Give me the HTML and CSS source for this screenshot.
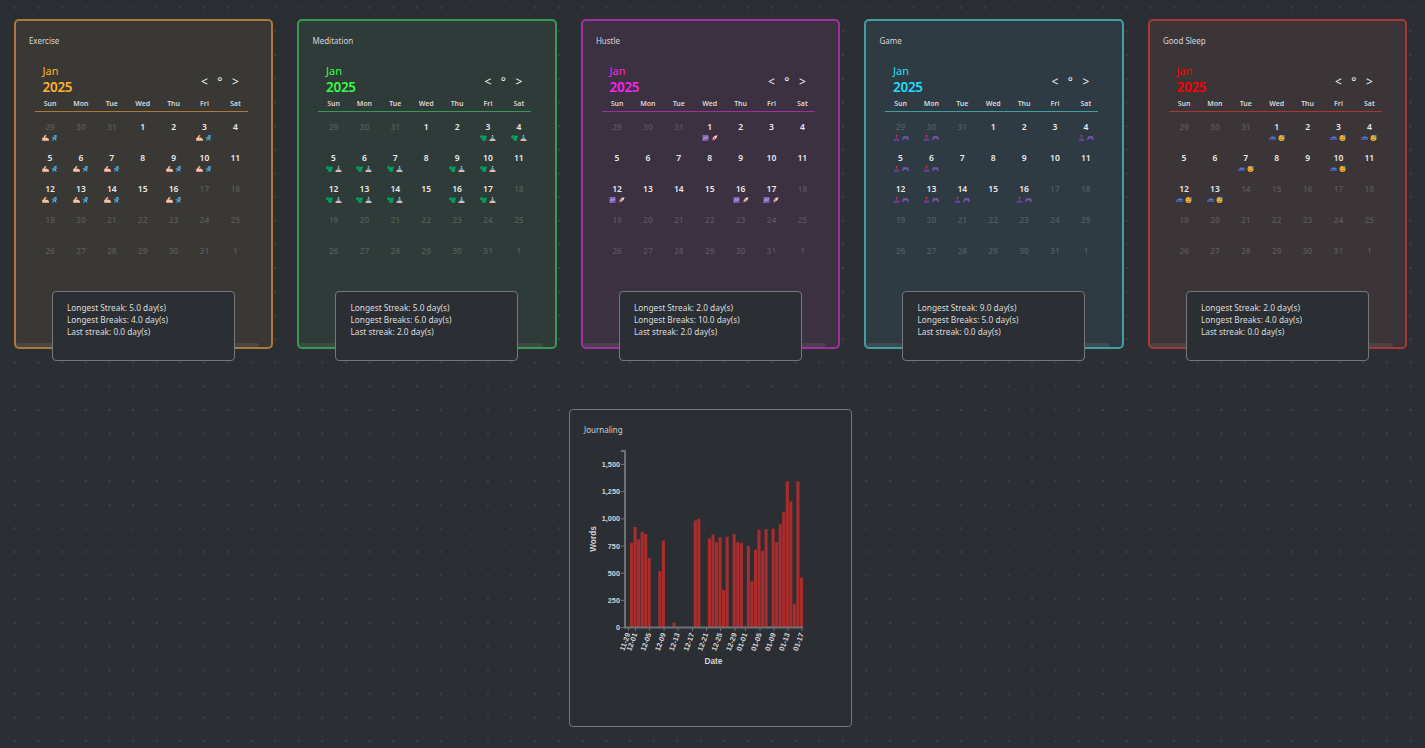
FILE: index.html
```html
<!DOCTYPE html>
<html>
<head>
    <meta charset="utf-8">
    <title>Habit Dashboard</title>
    <link rel="stylesheet" href="styles.css">
</head>
<body>

<svg class="sprites" width="0" height="0">
  <symbol id="i-flex" viewBox="0 0 14 12">
    <path fill="#f6c3a4" d="M0 12V6l3-1 2-4 3-1 1 2-2 1-1 3 3-1 4 2 1 3v2z"/>
    <path fill="#b9755a" d="M0 11h14v1H0zM0 6h1v5H0z"/>
  </symbol>
  <symbol id="i-run" viewBox="0 0 12 12">
    <path fill="#3a93cc" d="M5 0h3l1 3 3 1-1 2-3-1 1 3 2 3H8L5.500 8.500 3 12H1l2-5-3-1 1-2 3 .5z"/>
    <path fill="#aeb4ba" d="M8 0h2v3H8zM5 7l3-1 1 2-2 1z"/>
  </symbol>
  <symbol id="i-paw" viewBox="0 0 14 12">
    <path fill="#00a45f" d="M0 2l4-2 3 2 5-1 2 2-2 3 1 3-3 3-5-1-1-4-3-1z"/>
    <path fill="#0b6f55" d="M4 3h3v2H4zM9 7h2v2H9z"/>
  </symbol>
  <symbol id="i-zen" viewBox="0 0 12 12">
    <circle cx="6" cy="1.500" r="1.500" fill="#f2c2a0"/>
    <path fill="#3a9ddc" d="M4.500 3h3L10 8.500H2z"/>
    <path fill="#eeb896" d="M0 9l3-1h6l3 1v3H0z"/>
  </symbol>
  <symbol id="i-chart" viewBox="0 0 12 12">
    <path fill="#8a66b8" d="M0 0h12v12H0z"/>
    <path fill="#bfa8e0" d="M1 8l3-4 3 2 4-4v2L7 8 4 6l-2 3z"/>
    <path fill="#5d4488" d="M6 9h5v2H6z"/>
  </symbol>
  <symbol id="i-rocket" viewBox="0 0 12 12">
    <path fill="#f4dfe5" d="M12 0L6 2 2 7l3 3 5-4z"/>
    <path fill="#e8365d" d="M12 0L9 1l2 2zM2 7L0 8l1 1zM5 10l-1 2-1-1zM2 8l2 2-4 2z"/>
    <path fill="#e8365d" d="M4 6l2-2 2 2-2 2z"/>
  </symbol>
  <symbol id="i-joy" viewBox="0 0 12 12">
    <path fill="#e5333f" d="M4.500 0h3v3h-1v4h-1V3h-1z"/>
    <path fill="#5e3f96" d="M1.500 7h9l1.500 3v2H0v-2z"/>
  </symbol>
  <symbol id="i-pad" viewBox="0 0 14 10">
    <path fill="#6a4ba0" d="M2.500 1h9L14 7v2h-3L9 6H5L3 9H0V7z"/>
    <path fill="#a78bd0" d="M3.500 3h2v1h-2zM9 3h2v1H9z"/>
  </symbol>
  <symbol id="i-bed" viewBox="0 0 14 10">
    <path fill="#2f8fe6" d="M4 2l8 .5L14 6H4z"/>
    <path fill="#5b4fa0" d="M0 4h4v2h10v3H0z"/>
  </symbol>
  <symbol id="i-zzz" viewBox="0 0 12 12">
    <circle cx="6" cy="6" r="6" fill="#f1b232"/>
    <path fill="#3f8fe0" d="M7 0h5v3H7z"/>
    <path fill="#9a6a1e" d="M2 5h3v1H2zM7 5h3v1H7zM4 8h4v2H4z"/>
  </symbol>
</svg>

<div class="cards" id="cards"></div>

<div class="journal-row">
  <div class="journal">
    <div class="journal-title">Journaling</div>
    <svg id="chart" class="chart" viewBox="580 445 240 230" width="240" height="230"></svg>
  </div>
</div>

<script src="script.js"></script>
</body>
</html>
```

FILE: styles.css
```css
html, body {
    margin: 0;
    min-height: 100vh;
}
body {
    background-color: #2b2e33;
    background-image: radial-gradient(circle at center, #3d4045 0, #3d4045 1px, transparent 1.4px);
    background-size: 23.66px 23.66px;
    background-position: 3px -4px;
    font-family: "Noto Sans", "Open Sans", sans-serif;
    color: #ddd;
    overflow: hidden;
}
.sprites {
    display: block;
    height: 0;
}
.cards {
    display: grid;
    grid-template-columns: repeat(5, 259.5px);
    gap: 24px;
    padding: 19px 0 0 13.9px;
}
.card {
    position: relative;
    box-sizing: border-box;
    height: 330px;
    padding: 14px 13px 0;
    border: 2px solid;
    border-radius: 5px;
}
.card-title {
    font-size: 8px;
    line-height: 12px;
    color: #d6d6d6;
}
.cal {
    margin: 17px 0 0 5.7px;
    width: 216.3px;
}
.cal-head {
    display: flex;
    justify-content: space-between;
    padding: 0 12px 0 8px;
}
.month {
    font-size: 11px;
    line-height: 14px;
}
.year {
    font-size: 13.5px;
    line-height: 18px;
    font-weight: 600;
    letter-spacing: -0.3px;
}
.nav {
    display: flex;
    gap: 9.5px;
    align-items: center;
    margin-top: 4px;
    color: #f0f0f0;
    font-size: 12px;
    line-height: 14px;
}
.week, .days {
    display: grid;
    grid-template-columns: repeat(7, 30.9px);
    text-align: center;
}
.week {
    margin-top: 2px;
    font-size: 7px;
    line-height: 12px;
    font-weight: 600;
    color: #d8d8d8;
}
.rule {
    height: 1px;
    width: 213px;
    margin: 1px 0 9px;
}
.day {
    height: 31px;
    font-size: 8.5px;
    line-height: 12px;
    font-weight: 600;
    color: #eaeaea;
}
.day.dim {
    color: rgba(255, 255, 255, 0.17);
}
.marks {
    display: flex;
    justify-content: center;
    align-items: center;
    gap: 2px;
    height: 6px;
    margin-top: 2px;
}
.marks svg {
    width: 7px;
    height: 6px;
}
.scrollbar {
    position: absolute;
    left: 0;
    right: 12px;
    bottom: 0;
    height: 4px;
    background-color: rgba(255, 255, 255, 0.08);
    border-radius: 2px;
}
.stats {
    position: absolute;
    left: 36px;
    top: 270px;
    box-sizing: border-box;
    width: 183px;
    height: 70px;
    padding: 10px 14px;
    background-color: #2b2e33;
    border: 1px solid #75777a;
    border-radius: 4px;
    font-size: 8.3px;
    line-height: 12px;
    color: #dcdcdc;
}
.journal-row {
    display: flex;
    justify-content: center;
    padding-right: 4px;
    margin-top: 60px;
}
.journal {
    box-sizing: border-box;
    width: 283px;
    height: 318px;
    padding: 14px 10px 0;
    background-color: #2b2e33;
    border: 1px solid #75777a;
    border-radius: 4px;
}
.journal-title {
    font-size: 8px;
    line-height: 12px;
    margin: 0 0 9px 4px;
    color: #cfcfcf;
}
.chart {
    display: block;
    font-family: "Liberation Sans", sans-serif;
}
.chart .tick-text {
    font-size: 7.3px;
    font-weight: bold;
    fill: #d4d4d4;
}
.chart .axis-title {
    font-size: 8.3px;
    font-weight: bold;
    fill: #d4d4d4;
}
.chart .axis {
    stroke: #6f7174;
    fill: none;
}
.chart .bar {
    fill: #aa2c2c;
}
```

FILE: script.js
```js
const habits = [
    { name: 'Exercise', color: '#fdb32f', border: '#a87a3c', bg: '#3a3835', icons: ['i-flex', 'i-run'],
      marked: ['p29', 3, 5, 6, 7, 9, 10, 12, 13, 14, 16], last: 16,
      stats: ['5.0', '4.0', '0.0'] },
    { name: 'Meditation', color: '#33ff44', border: '#389a52', bg: '#2f3b38', icons: ['i-paw', 'i-zen'],
      marked: [3, 4, 5, 6, 7, 9, 10, 12, 13, 14, 16, 17], last: 17,
      stats: ['5.0', '6.0', '2.0'] },
    { name: 'Hustle', color: '#ff22ee', border: '#a0309e', bg: '#3b3140', icons: ['i-chart', 'i-rocket'],
      marked: [1, 12, 16, 17], last: 17,
      stats: ['2.0', '10.0', '2.0'] },
    { name: 'Game', color: '#22ddff', border: '#3f9fa3', bg: '#2f3b42', icons: ['i-joy', 'i-pad'],
      marked: ['p29', 'p30', 4, 5, 6, 12, 13, 14, 16], last: 16,
      stats: ['9.0', '5.0', '0.0'] },
    { name: 'Good Sleep', color: '#ff0000', border: '#a83838', bg: '#3b3538', icons: ['i-bed', 'i-zzz'],
      marked: [1, 3, 4, 7, 10, 12, 13], last: 13,
      stats: ['2.0', '4.0', '0.0'] }
];

const weekdays = ['Sun', 'Mon', 'Tue', 'Wed', 'Thu', 'Fri', 'Sat'];

function buildDays(habit) {
    let cells = [];
    // leading days of december, then january, then one day of february
    [29, 30, 31].forEach(d => cells.push({ label: d, key: 'p' + d, dim: true }));
    for (let d = 1; d <= 31; d++) {
        cells.push({ label: d, key: d, dim: d > habit.last });
    }
    cells.push({ label: 1, key: 'n1', dim: true });

    return cells.map(c => {
        let marks = '';
        if (habit.marked.includes(c.key)) {
            marks = habit.icons.map(i => `<svg><use href="#${i}"></use></svg>`).join('');
        }
        return `<div class="day${c.dim ? ' dim' : ''}">${c.label}<div class="marks">${marks}</div></div>`;
    }).join('');
}

document.getElementById('cards').innerHTML = habits.map(h => `
    <div class="card" style="border-color:${h.border};background-color:${h.bg}">
      <div class="card-title">${h.name}</div>
      <div class="cal">
        <div class="cal-head">
          <div style="color:${h.color}">
            <div class="month">Jan</div>
            <div class="year">2025</div>
          </div>
          <div class="nav"><span>&lt;</span><span>°</span><span>&gt;</span></div>
        </div>
        <div class="week">${weekdays.map(w => `<div>${w}</div>`).join('')}</div>
        <div class="rule" style="background-color:${h.border}"></div>
        <div class="days">${buildDays(h)}</div>
      </div>
      <div class="scrollbar"></div>
      <div class="stats">
        Longest Streak: ${h.stats[0]} day(s)<br>
        Longest Breaks: ${h.stats[1]} day(s)<br>
        Last streak: ${h.stats[2]} day(s)
      </div>
    </div>`).join('');

// slot number -> words, read off the journal
const words = { 0: 780, 1: 925, 2: 810, 3: 880, 4: 860, 5: 638, 8: 520, 9: 800, 12: 45, 18: 985, 19: 1000,
    22: 820, 23: 855, 24: 785, 25: 830, 26: 345, 27: 835, 28: 10, 29: 860, 30: 785, 31: 780, 32: 12,
    33: 750, 34: 425, 35: 715, 36: 900, 37: 705, 38: 905, 39: 12, 40: 910, 41: 785, 42: 950, 43: 1060,
    44: 1345, 45: 1160, 46: 215, 47: 1345, 48: 460 };

const baseY = 627.5;
const perWord = 163 / 1500;
const slotX = s => 630 + s * 3.54;

let chart = '';
chart += `<rect class="bar" x="624.500" y="${baseY - 780 * perWord}" width="1.500" height="${780 * perWord}"></rect>`;
Object.keys(words).forEach(s => {
    let h = words[s] * perWord;
    chart += `<rect class="bar" x="${slotX(+s)}" y="${baseY - h}" width="3.100" height="${h}"></rect>`;
});

[0, 250, 500, 750, 1000, 1250, 1500].forEach(v => {
    let y = baseY - v * perWord;
    chart += `<line class="axis" x1="621" x2="625" y1="${y}" y2="${y}"></line>`;
    chart += `<text class="tick-text" x="620" y="${y + 2.500}" text-anchor="end">${v.toLocaleString('en-US')}</text>`;
});

const ticks = [[628.5, '11-29'], [635.5, '12-01'], [649.5, '12-05'], [664, '12-09'], [678, '12-13'], [692.5, '12-17'],
    [706.5, '12-21'], [720.5, '12-25'], [735, '12-29'], [745.5, '01-01'], [760, '01-05'], [774, '01-09'],
    [788, '01-13'], [802, '01-17']];
ticks.forEach(t => {
    chart += `<line class="axis" x1="${t[0]}" x2="${t[0]}" y1="627" y2="631"></line>`;
    chart += `<text class="tick-text" text-anchor="end" transform="translate(${t[0] + 2} 634) rotate(-70)">${t[1]}</text>`;
});

chart += `<path class="axis" stroke-width="2" d="M621 451h4V627.500h178"></path>`;
chart += `<text class="axis-title" text-anchor="middle" transform="translate(596 539) rotate(-90)">Words</text>`;
chart += `<text class="axis-title" text-anchor="middle" x="713.500" y="664">Date</text>`;

document.getElementById('chart').innerHTML = chart;
```
